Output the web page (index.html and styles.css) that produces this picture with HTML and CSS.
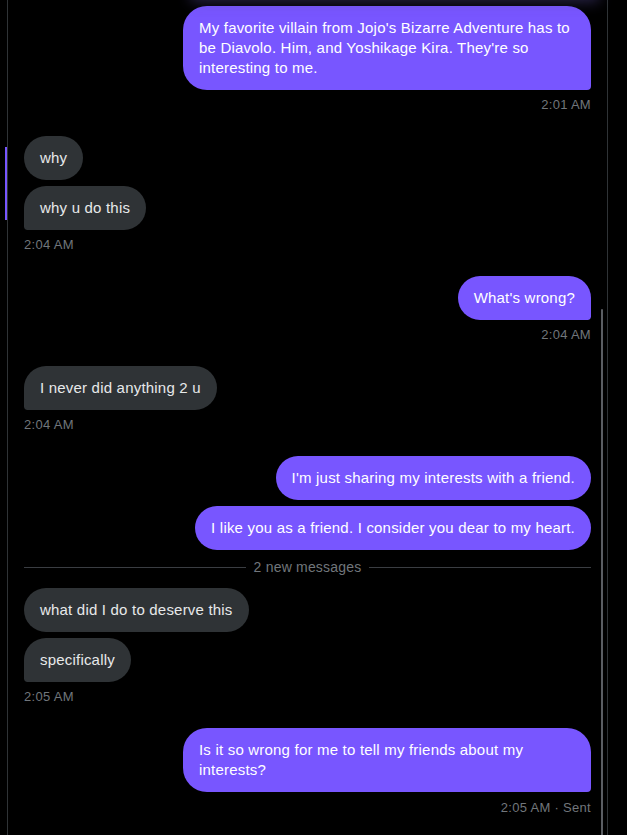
FILE: index.html
```html
<!DOCTYPE html>
<html lang="en">
<head>
<meta charset="utf-8">
<title>Messages</title>
<link rel="stylesheet" href="styles.css">
</head>
<body>
<div class="pane">
  <div class="top-glow"></div>
  <div class="focus-bar"></div>
  <div class="scroll-thumb"></div>
  <div class="list">
    <div class="group out">
      <div class="bubble tail">My favorite villain from Jojo's Bizarre Adventure has to be Diavolo. Him, and Yoshikage Kira. They're so interesting to me.</div>
      <div class="time">2:01 AM</div>
    </div>

    <div class="group in">
      <div class="bubble">why</div>
      <div class="bubble tail">why u do this</div>
      <div class="time">2:04 AM</div>
    </div>

    <div class="group out">
      <div class="bubble tail">What's wrong?</div>
      <div class="time">2:04 AM</div>
    </div>

    <div class="group in">
      <div class="bubble tail">I never did anything 2 u</div>
      <div class="time">2:04 AM</div>
    </div>

    <div class="group out">
      <div class="bubble">I'm just sharing my interests with a friend.</div>
      <div class="bubble">I like you as a friend. I consider you dear to my heart.</div>
    </div>

    <div class="divider"><span>2 new messages</span></div>

    <div class="group in">
      <div class="bubble">what did I do to deserve this</div>
      <div class="bubble tail">specifically</div>
      <div class="time">2:05 AM</div>
    </div>

    <div class="group out">
      <div class="bubble tail">Is it so wrong for me to tell my friends about my interests?</div>
      <div class="time sent">2:05 AM · Sent</div>
    </div>
  </div>
</div>
</body>
</html>
```

FILE: styles.css
```css
* {
  box-sizing: border-box;
}

html, body {
  margin: 0;
  padding: 0;
  background: #000;
  height: 100%;
}

body {
  font-family: "Liberation Sans", Arial, sans-serif;
  color: #e7e9ea;
  overflow: hidden;
}

.pane {
  position: relative;
  margin-left: 7px;
  width: 601px;
  min-height: 835px;
  border-left: 1px solid #2f3336;
  border-right: 1px solid #2f3336;
}

.top-glow {
  position: absolute;
  top: -20px;
  left: 185px;
  right: 10px;
  height: 20px;
  box-shadow: 0 0 14px 2px rgba(90, 80, 160, 0.45);
  background: #000;
}

.focus-bar {
  position: absolute;
  left: -3px;
  top: 147px;
  width: 2px;
  height: 73px;
  background: #7856ff;
}

.scroll-thumb {
  position: absolute;
  right: 4px;
  top: 309px;
  bottom: 3px;
  width: 2px;
  border-radius: 1px;
  background: #5b5e63;
}

.list {
  padding: 6px 16px 0 16px;
  display: flex;
  flex-direction: column;
}

.group {
  display: flex;
  flex-direction: column;
  gap: 6px;
  margin-bottom: 23px;
}

.group.out {
  align-items: flex-end;
}

.group.in {
  align-items: flex-start;
}

.bubble {
  max-width: 408px;
  padding: 12px 16px;
  font-size: 15px;
  line-height: 20px;
  letter-spacing: 0.2px;
  border-radius: 24px;
}

.group.out .bubble {
  background: #7856ff;
  color: #fff;
}

.group.in .bubble {
  background: #2f3336;
  color: #e7e9ea;
}

.group.out .bubble.tail {
  border-bottom-right-radius: 4px;
}

.group.in .bubble.tail {
  border-bottom-left-radius: 4px;
}

.time {
  margin-top: 1px;
  font-size: 13px;
  line-height: 16px;
  letter-spacing: 0.3px;
  color: #71767b;
}

.time.sent {
  margin-top: 2px;
}

.group:has(+ .divider) {
  margin-bottom: 9px;
}

.divider {
  display: flex;
  align-items: center;
  gap: 8px;
  height: 16px;
  margin-bottom: 13px;
  font-size: 14px;
  letter-spacing: 0.2px;
  color: #71767b;
}

.divider::before,
.divider::after {
  content: "";
  flex: 1;
  height: 1px;
  background: #3a3d42;
}
```
